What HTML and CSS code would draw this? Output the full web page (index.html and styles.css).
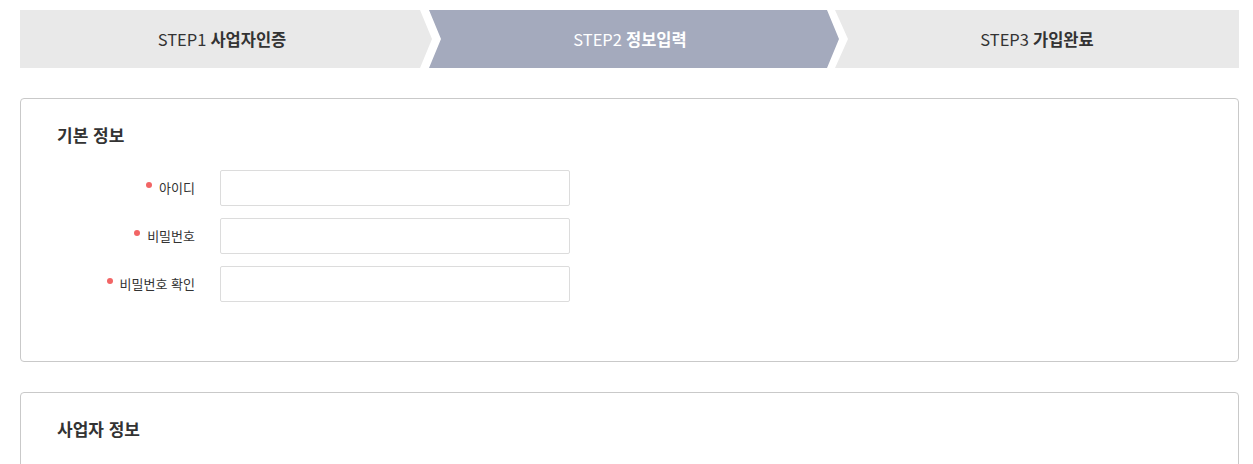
FILE: index.html
```html
<!DOCTYPE html>
<html lang="ko">
<head>
  <meta charset="UTF-8">
  <title>회원가입 - 정보입력</title>
  <link rel="stylesheet" href="styles.css">
</head>
<body>
  <div class="wrap">
    <ol class="steps">
      <li class="step step-first">STEP1 <strong>사업자인증</strong></li>
      <li class="step step-mid active">STEP2 <strong>정보입력</strong></li>
      <li class="step step-last">STEP3 <strong>가입완료</strong></li>
    </ol>

    <section class="card">
      <h2 class="card-title">기본 정보</h2>
      <div class="form">
        <div class="form-row">
          <label class="form-label required" for="userId">아이디</label>
          <input type="text" id="userId" class="form-input">
        </div>
        <div class="form-row">
          <label class="form-label required" for="userPw">비밀번호</label>
          <input type="password" id="userPw" class="form-input">
        </div>
        <div class="form-row">
          <label class="form-label required" for="userPw2">비밀번호 확인</label>
          <input type="password" id="userPw2" class="form-input">
        </div>
      </div>
    </section>

    <section class="card">
      <h2 class="card-title">사업자 정보</h2>
      <div class="form"></div>
    </section>
  </div>
</body>
</html>
```

FILE: styles.css
```css
body {
  margin: 0;
  font-family: "Noto Sans CJK KR", "Noto Sans", sans-serif;
  color: #333;
  background-color: #fff;
}

.wrap {
  width: 1219px;
  padding: 10px 0 0 20px;
}

/* 단계 표시 */
.steps {
  display: flex;
  margin: 0 0 30px;
  padding: 0;
  list-style: none;
}

.step {
  height: 58px;
  display: flex;
  align-items: center;
  justify-content: center;
  gap: 4px;
  font-size: 16.5px;
  background-color: #e9e9e9;
  color: #333;
}

.step strong {
  font-weight: 700;
}

.step-first {
  width: 412px;
  padding-right: 8px;
  box-sizing: border-box;
  clip-path: polygon(0 0, calc(100% - 12px) 0, 100% 50%, calc(100% - 12px) 100%, 0 100%);
}

.step-mid {
  width: 410px;
  margin-left: -3px;
  padding-right: 8px;
  box-sizing: border-box;
  clip-path: polygon(0 0, calc(100% - 12px) 0, 100% 50%, calc(100% - 12px) 100%, 0 100%, 12px 50%);
}

.step-last {
  flex: 1;
  margin-left: -4px;
  clip-path: polygon(0 0, 100% 0, 100% 100%, 0 100%, 13px 50%);
}

.step.active {
  background-color: #a4aabd;
  color: #fff;
}

/* 카드 */
.card {
  border: 1px solid #c9c9c9;
  border-radius: 4px;
  padding: 24px 36px 59px;
  margin-bottom: 30px;
}

.card-title {
  margin: 0 0 23px;
  font-size: 17px;
  line-height: 24px;
  font-weight: 700;
}

.form {
  display: flex;
  flex-direction: column;
  gap: 12px;
}

.form-row {
  display: flex;
  align-items: center;
  gap: 25px;
}

.form-label {
  width: 138px;
  display: flex;
  align-items: center;
  justify-content: flex-end;
  font-size: 13px;
  line-height: 18px;
}

.form-label.required::before {
  content: "";
  width: 6px;
  height: 6px;
  margin: 0 7px 7px 0;
  border-radius: 50%;
  background-color: #f26565;
}

.form-input {
  width: 350px;
  height: 36px;
  box-sizing: border-box;
  border: 1px solid #dcdcdc;
  border-radius: 2px;
  padding: 0 10px;
  font-size: 13px;
  font-family: inherit;
}
```
